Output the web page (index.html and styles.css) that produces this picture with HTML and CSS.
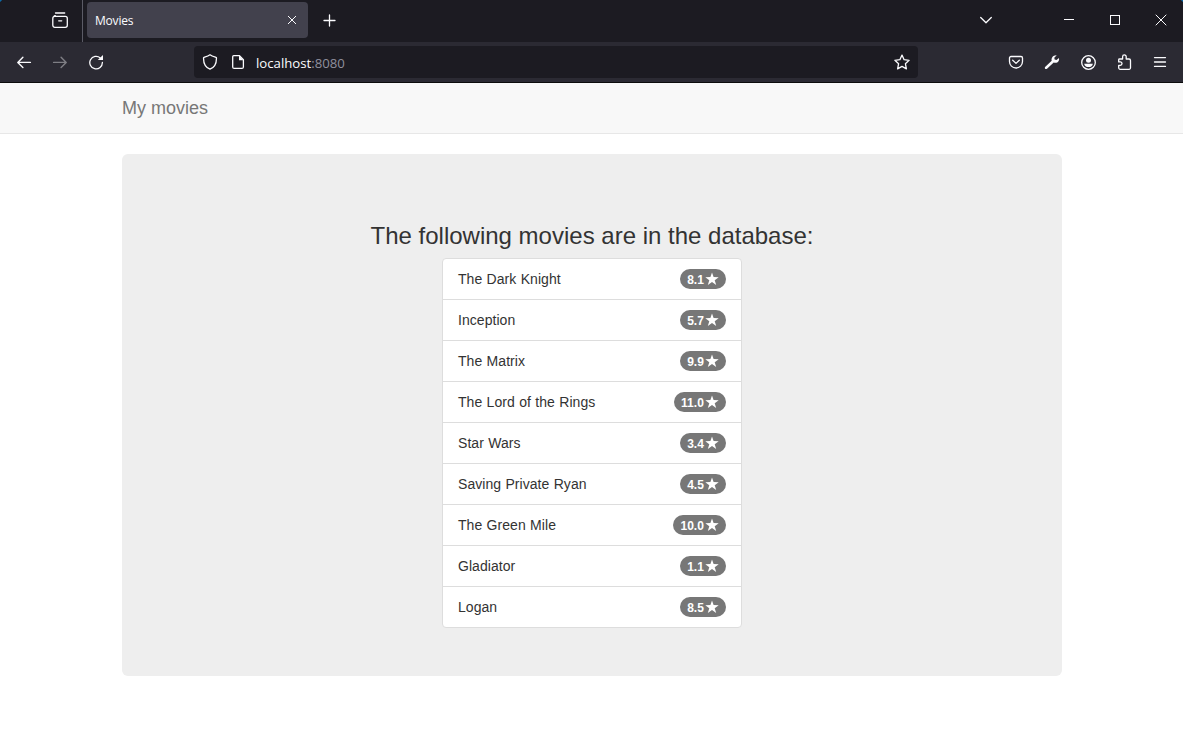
FILE: index.html
```html
<!DOCTYPE html>
<html lang="en">
<head>
<meta charset="utf-8">
<title>Movies</title>
<link rel="stylesheet" href="styles.css">
</head>
<body>
<svg class="defs" width="0" height="0" aria-hidden="true">
  <symbol id="star" viewBox="0 0 14 14"><path d="M7 .5 8.600 5.100 13.700 5.200 9.700 8.200 11.200 13 7 10.100 2.800 13 4.300 8.200 .3 5.200 5.400 5.100Z"/></symbol>
</svg>
<header class="browser">
  <div class="tabstrip">
    <div class="view"><svg class="icon" viewBox="0 0 16 16"><path d="M3.500 1h9.200M2.300 3.900 3.300 3.700"/><rect x=".8" y="4.400" width="14.500" height="10.900" rx="2"/><path d="M6.700 8.800h3"/></svg></div>
    <div class="tab"><span class="tab-title">Movies</span><svg class="tab-close" viewBox="0 0 10 10"><path d="m1 1 8 8M9 1 1 9"/></svg></div>
    <div class="new-tab"><svg class="icon" viewBox="0 0 16 16"><path d="M8.500 3v11M3 8.500h11"/></svg></div>
    <div class="all-tabs"><svg class="icon" viewBox="0 0 16 16"><path d="m2.700 5.500 5.300 5.200 5.300-5.200"/></svg></div>
    <div class="window-button"><svg class="icon crisp" viewBox="0 0 16 16"><path d="M3 7.500h10"/></svg></div>
    <div class="window-button"><svg class="icon crisp" viewBox="0 0 16 16"><path d="M3.500 3.500h9v9h-9z"/></svg></div>
    <div class="window-button"><svg class="icon thin" viewBox="0 0 16 16"><path d="m3 3 10 10M13 3 3 13"/></svg></div>
  </div>
  <div class="toolbar">
    <div class="nav">
      <div class="tool"><svg class="icon bold" viewBox="0 0 16 16"><path d="M14.400 8.400H2M6.900 3.200 1.800 8.400l5.100 5.200"/></svg></div>
      <div class="tool disabled"><svg class="icon bold" viewBox="0 0 16 16"><path d="M1.600 8.400H14M9.100 3.200l5.100 5.200-5.100 5.200"/></svg></div>
      <div class="tool"><svg class="icon" viewBox="0 0 16 16"><path d="M14.400 8.500A6.300 6.300 0 1 1 12.300 3.900"/><path class="solid" d="M15 1v5.100H9.800z"/></svg></div>
    </div>
    <div class="urlbar">
      <svg class="icon shield" viewBox="0 0 16 16"><path d="M8 .8c2 1.500 4.200 2 6.400 2.700.3 5.200-1.300 9.500-6.400 11.700C2.900 13 1.300 8.700 1.600 3.500 3.800 2.800 6 2.300 8 .8z"/></svg>
      <svg class="icon page-icon" viewBox="0 0 16 16"><path d="M3.700 1.700h5.800l3.900 3.900v7.300a1.500 1.500 0 0 1-1.500 1.500H4.200a1.500 1.500 0 0 1-1.500-1.500V2.700a1 1 0 0 1 1-1z"/><path class="solid" d="M9 1.500v4.700h4.500z"/></svg>
      <span class="url">localhost<span class="port">:8080</span></span>
      <svg class="icon bookmark" viewBox="0 0 16 16"><path d="m8 1.100 2.100 4.600 5 .6-3.700 3.400 1 5.200L8 12.400l-4.400 2.500 1-5.200L.9 6.300l5-.6z"/></svg>
    </div>
    <div class="actions">
      <div class="tool"><svg class="icon" viewBox="0 0 16 16"><path d="M3 2.500h10a1.500 1.500 0 0 1 1.500 1.500v3.500a6.500 6.500 0 0 1-13 0V4A1.500 1.500 0 0 1 3 2.500z"/><path d="m4.700 6.300 3.300 3.100 3.300-3.100"/></svg></div>
      <div class="tool"><svg class="icon" viewBox="0 0 16 16"><path class="solid" d="M12.700 1.300 10.300 3.700l.3 1.900 1.900.3 2.500-2c.4 2.300-.4 3.800-1.800 4.500-1.200.6-2.500.5-3.500.1L3 14.700c-1.300 1-2.900-.5-1.900-1.800L7.700 6.700C7 4.200 9 1 12.700 1.300z"/></svg></div>
      <div class="tool"><svg class="icon" viewBox="0 0 16 16"><circle cx="8.500" cy="8.500" r="6.800"/><circle class="solid" cx="8.500" cy="6.300" r="2.500"/><path class="solid" d="M4.200 9.700h8.600c-.2 2.100-2 3.400-4.300 3.400s-4.100-1.300-4.300-3.400z"/></svg></div>
      <div class="tool"><svg class="icon" viewBox="0 0 16 16"><path d="M3.500 5h3.100V2.700a1.800 1.800 0 0 1 3.600 0V5h2.800a1.500 1.500 0 0 1 1.500 1.500v7.300a1.500 1.500 0 0 1-1.500 1.500H4.200a1.500 1.500 0 0 1-1.500-1.500v-2.500h1.600a1.700 1.700 0 0 0 0-3.400H2.700V5.800a.8.800 0 0 1 .8-.8z"/></svg></div>
      <div class="tool"><svg class="icon" viewBox="0 0 16 16"><path d="M2.500 3.600h11M2.500 8h11M2.500 12.400h11"/></svg></div>
    </div>
  </div>
</header>
<nav class="navbar"><div class="container"><span class="brand">My movies</span></div></nav>
<main class="container">
  <section class="jumbotron">
    <h1 class="heading">The following movies are in the database:</h1>
    <ul class="list">
      <li class="item">The Dark Knight<span class="badge">8.1<svg class="star"><use href="#star"/></svg></span></li>
      <li class="item">Inception<span class="badge">5.7<svg class="star"><use href="#star"/></svg></span></li>
      <li class="item">The Matrix<span class="badge">9.9<svg class="star"><use href="#star"/></svg></span></li>
      <li class="item">The Lord of the Rings<span class="badge">11.0<svg class="star"><use href="#star"/></svg></span></li>
      <li class="item">Star Wars<span class="badge">3.4<svg class="star"><use href="#star"/></svg></span></li>
      <li class="item">Saving Private Ryan<span class="badge">4.5<svg class="star"><use href="#star"/></svg></span></li>
      <li class="item">The Green Mile<span class="badge">10.0<svg class="star"><use href="#star"/></svg></span></li>
      <li class="item">Gladiator<span class="badge">1.1<svg class="star"><use href="#star"/></svg></span></li>
      <li class="item">Logan<span class="badge">8.5<svg class="star"><use href="#star"/></svg></span></li>
    </ul>
  </section>
</main>
</body>
</html>
```
FILE: styles.css
```css
* { box-sizing: border-box; }
body {
  margin: 0;
  height: 740px;
  overflow: hidden;
  background: #fff;
  color: #333;
  font: 14px/20px "Liberation Sans", Arial, sans-serif;
}
.defs { position: absolute; }

/* Browser window */
.browser { color: #fbfbfe; font-family: "Open Sans", "Noto Sans", sans-serif; }
.tabstrip {
  display: flex;
  align-items: center;
  height: 42px;
  overflow: hidden;
  background:
    linear-gradient(135deg, #0b6aa8 1px, transparent 2px),
    linear-gradient(225deg, #0b6aa8 1px, transparent 2px),
    #1c1b22;
}
.icon {
  display: block;
  flex: none;
  width: 16px;
  height: 16px;
  fill: none;
  stroke: #fbfbfe;
  stroke-width: 1.3;
  stroke-linecap: round;
  stroke-linejoin: round;
}
.icon.bold { stroke-width: 1.4; }
.icon.thin { stroke-width: 1; }
.icon.crisp { stroke-width: 1; stroke-linecap: butt; stroke-linejoin: miter; shape-rendering: crispEdges; }
.icon .solid { fill: #fbfbfe; stroke: none; }
.view {
  display: flex;
  align-items: center;
  width: 83px;
  height: 42px;
  padding: 0 0 2px 52px;
  border-right: 1px solid #5b5b66;
}
.tab {
  display: flex;
  align-items: center;
  justify-content: space-between;
  width: 221px;
  height: 36px;
  margin: 0 0 2px 4px;
  padding: 0 11px 0 8px;
  border-radius: 4px;
  background: #42414d;
  font-size: 12px;
}
.tab-title { line-height: 18px; padding-top: 1px; letter-spacing: -.2px; }
.tab-close { width: 10px; height: 10px; fill: none; stroke: #fbfbfe; stroke-width: 1; }
.new-tab { margin: 0 auto 2px 13px; }
.all-tabs { margin: 0 52px 2px 0; }
.window-button {
  display: flex;
  flex: none;
  justify-content: center;
  width: 46px;
  padding-bottom: 2px;
}
.window-button:last-child { margin-right: -1px; }
.toolbar {
  display: flex;
  align-items: center;
  height: 41px;
  padding: 0 5px 1px 6px;
  border-bottom: 1px solid #0c0c0d;
  background: #2b2a33;
}
.nav, .actions { display: flex; }
.tool { display: flex; justify-content: center; width: 36px; }
.disabled { opacity: .4; }
.urlbar {
  display: flex;
  align-items: center;
  width: 724px;
  height: 32px;
  margin: 1px auto 0 80px;
  padding: 0 8px;
  border-radius: 4px;
  background: #1c1b22;
}
.page-icon { margin-left: 12px; }
.url { margin-left: 10px; padding-top: 1px; font-size: 13.2px; }
.port { color: #8f8f9d; }
.bookmark { margin-left: auto; }

/* Page */
.container { width: 940px; margin: 0 auto 0 122px; }
.navbar {
  height: 51px;
  margin-bottom: 20px;
  padding-top: 15px;
  border-bottom: 1px solid #e7e7e7;
  background: #f8f8f8;
}
.brand { display: block; color: #777; font-size: 18px; }
.jumbotron {
  height: 522px;
  padding-top: 69px;
  border-radius: 6px;
  background: #eee;
}
.heading {
  margin: 0 0 9px;
  font-size: 24px;
  font-weight: 400;
  line-height: 26px;
  text-align: center;
}
.list {
  width: 300px;
  margin: 0 auto;
  padding: 0;
  border: 1px solid #ddd;
  border-radius: 4px;
  background: #fff;
  list-style: none;
}
.item {
  display: flex;
  align-items: center;
  justify-content: space-between;
  height: 41px;
  padding: 0 15px;
  border-bottom: 1px solid #ddd;
  letter-spacing: .05px;
  word-spacing: .4px;
}
.item:last-child { height: 40px; border-bottom: 0; }
.badge {
  display: flex;
  align-items: center;
  height: 20px;
  padding: 1px 6px 0 7px;
  border-radius: 10px;
  background: #777;
  color: #fff;
  font-size: 12px;
  font-weight: 700;
  letter-spacing: 0;
  line-height: 14px;
}
.star { width: 14px; height: 14px; margin: -2px .6px 0 1.6px; fill: #fff; }
```
